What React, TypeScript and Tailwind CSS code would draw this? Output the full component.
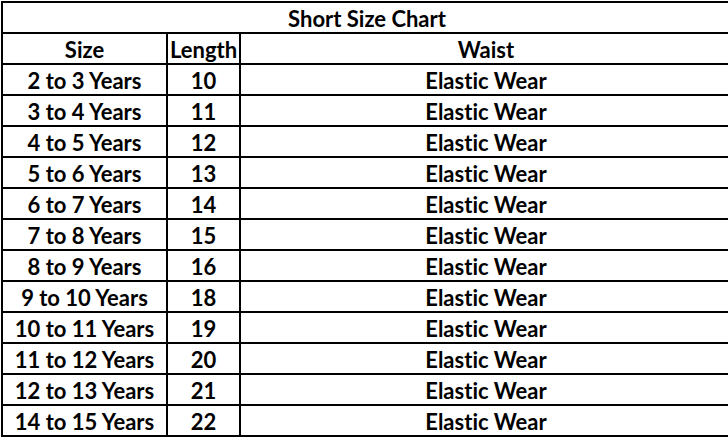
const rows: [string, string][] = [
  ["2 to 3 Years", "10"],
  ["3 to 4 Years", "11"],
  ["4 to 5 Years", "12"],
  ["5 to 6 Years", "13"],
  ["6 to 7 Years", "14"],
  ["7 to 8 Years", "15"],
  ["8 to 9 Years", "16"],
  ["9 to 10 Years", "18"],
  ["10 to 11 Years", "19"],
  ["11 to 12 Years", "20"],
  ["12 to 13 Years", "21"],
  ["14 to 15 Years", "22"],
];

const Row = ({ a, b, c }: { a: string; b: string; c: string }) => (
  <div className="flex h-[31px] border-b-2 border-black">
    <div className="w-[165px] shrink-0 border-r-2 border-black flex items-center justify-center pt-[3px]">{a}</div>
    <div className="w-[73px] shrink-0 border-r-2 border-black flex items-center justify-center pt-[3px]">{b}</div>
    <div className="flex-1 flex items-center justify-center pt-[3px]">{c}</div>
  </div>
);

export default function App() {
  return (
    <div className="w-[728px] h-[438px] overflow-hidden bg-white pt-px pl-px">
      <div
        className="w-[732px] border-t-2 border-l-2 border-r-2 border-black text-black font-bold text-[22px] leading-none [font-variant-ligatures:none]"
        style={{ fontFamily: "Lato, 'Open Sans', sans-serif" }}
      >
        <div className="h-[31px] border-b-2 border-black flex items-center justify-center pt-[3px]">
          Short Size Chart
        </div>
        <Row a="Size" b="Length" c="Waist" />
        {rows.map(([s, l]) => (
          <Row key={s} a={s} b={l} c="Elastic Wear" />
        ))}
      </div>
    </div>
  );
}
